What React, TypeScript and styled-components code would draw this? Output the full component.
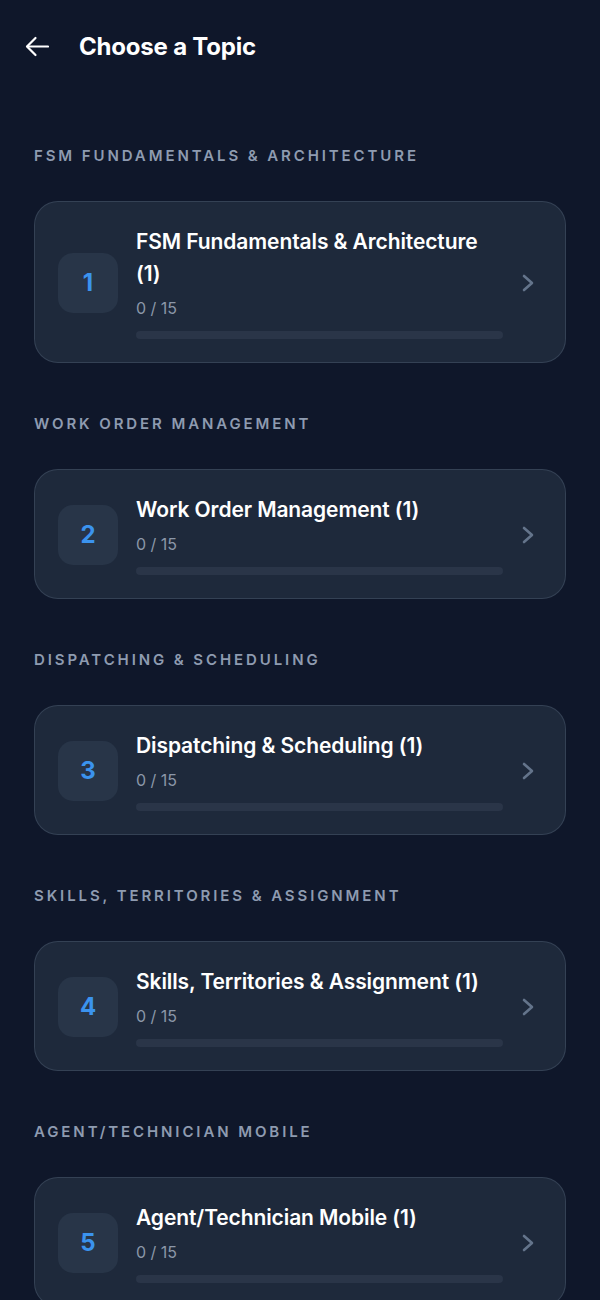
import React from 'react'
import styled, { createGlobalStyle } from 'styled-components'

type Topic = {
  section: string,
  title: string,
  done: number,
  total: number
}

const topics: Topic[] = [
  { section: 'FSM Fundamentals & Architecture', title: 'FSM Fundamentals & Architecture (1)', done: 0, total: 15 },
  { section: 'Work Order Management', title: 'Work Order Management (1)', done: 0, total: 15 },
  { section: 'Dispatching & Scheduling', title: 'Dispatching & Scheduling (1)', done: 0, total: 15 },
  { section: 'Skills, Territories & Assignment', title: 'Skills, Territories & Assignment (1)', done: 0, total: 15 },
  { section: 'Agent/Technician Mobile', title: 'Agent/Technician Mobile (1)', done: 0, total: 15 },
]

const App: React.FC = () => {
  return (
    <>
      <GlobalStyle />
      <Page>
        <Header>
          <BackButton aria-label='Back'>
            <svg width='24' height='24' viewBox='0 0 24 24' fill='none' stroke='#fff' strokeWidth='2.2' strokeLinecap='round' strokeLinejoin='round'>
              <path d='M23 12.5H2.5' />
              <path d='M10.5 4L2 12.5L10.5 21' />
            </svg>
          </BackButton>
          <Title>Choose a Topic</Title>
        </Header>
        <List>
          {
            topics.map((t, index) => {
              return <Section key={index}>
                <SectionLabel>{t.section}</SectionLabel>
                <Card>
                  <NumberBox>{index + 1}</NumberBox>
                  <Info>
                    <CardTitle>{t.title}</CardTitle>
                    <Meta>{t.done} / {t.total}</Meta>
                    <Track>
                      <Fill style={{ width: `${(t.done / t.total) * 100}%` }} />
                    </Track>
                  </Info>
                  <Chevron width='12' height='18' viewBox='0 0 12 18' fill='none' stroke='#64748b' strokeWidth='2.6' strokeLinecap='round' strokeLinejoin='round'>
                    <path d='M2 2L10 9L2 16' />
                  </Chevron>
                </Card>
              </Section>
            })
          }
        </List>
      </Page>
    </>
  )
}

const GlobalStyle = createGlobalStyle`
  html, body {
    margin: 0;
    padding: 0;
    background: #0f172a;
  }
  body {
    font-family: Inter, "Noto Sans", "Liberation Sans", sans-serif;
    -webkit-font-smoothing: antialiased;
  }
`

const Page = styled.div`
  min-height: 1300px;
  background: #0f172a;
  color: #fff;
`

const Header = styled.header`
  height: 92px;
  display: flex;
  align-items: center;
  padding: 0 0 0 25px;
  gap: 30px;
`

const BackButton = styled.button`
  width: 24px;
  height: 24px;
  padding: 0;
  border: none;
  background: none;
  display: flex;
  align-items: center;
  justify-content: center;
  cursor: pointer;
`

const Title = styled.h1`
  margin: 0;
  font-size: 24px;
  font-weight: 700;
  letter-spacing: -0.2px;
  color: #fff;
`

const List = styled.div`
  display: flex;
  flex-direction: column;
  gap: 51px;
  padding: 54px 34px 40px;
`

const Section = styled.section`
  display: flex;
  flex-direction: column;
  gap: 35px;
`

const SectionLabel = styled.div`
  font-size: 15px;
  line-height: 20px;
  font-weight: 600;
  letter-spacing: 2.9px;
  text-transform: uppercase;
  color: #8e9bb0;
`

const Card = styled.div`
  display: flex;
  align-items: center;
  padding: 24px 31px 23px 23px;
  border: 1px solid rgba(71, 85, 105, 0.55);
  border-radius: 24px;
  background: #1e293b;
`

const NumberBox = styled.div`
  flex: none;
  width: 60px;
  height: 60px;
  border-radius: 15px;
  background: #283548;
  display: flex;
  align-items: center;
  justify-content: center;
  font-size: 24px;
  font-weight: 700;
  color: #3b93ee;
`

const Info = styled.div`
  flex: 1;
  min-width: 0;
  margin-left: 18px;
  display: flex;
  flex-direction: column;
`

const CardTitle = styled.div`
  font-size: 21px;
  line-height: 32px;
  font-weight: 600;
  letter-spacing: -0.1px;
  color: #fff;
`

const Meta = styled.div`
  margin-top: 7px;
  font-size: 16px;
  line-height: 22px;
  color: #8b97a8;
`

const Track = styled.div`
  margin-top: 12px;
  height: 8px;
  border-radius: 4px;
  background: #2a3548;
  overflow: hidden;
`

const Fill = styled.div`
  height: 100%;
  background: #3b93ee;
`

const Chevron = styled.svg`
  flex: none;
  margin-left: 19px;
`

export default App
